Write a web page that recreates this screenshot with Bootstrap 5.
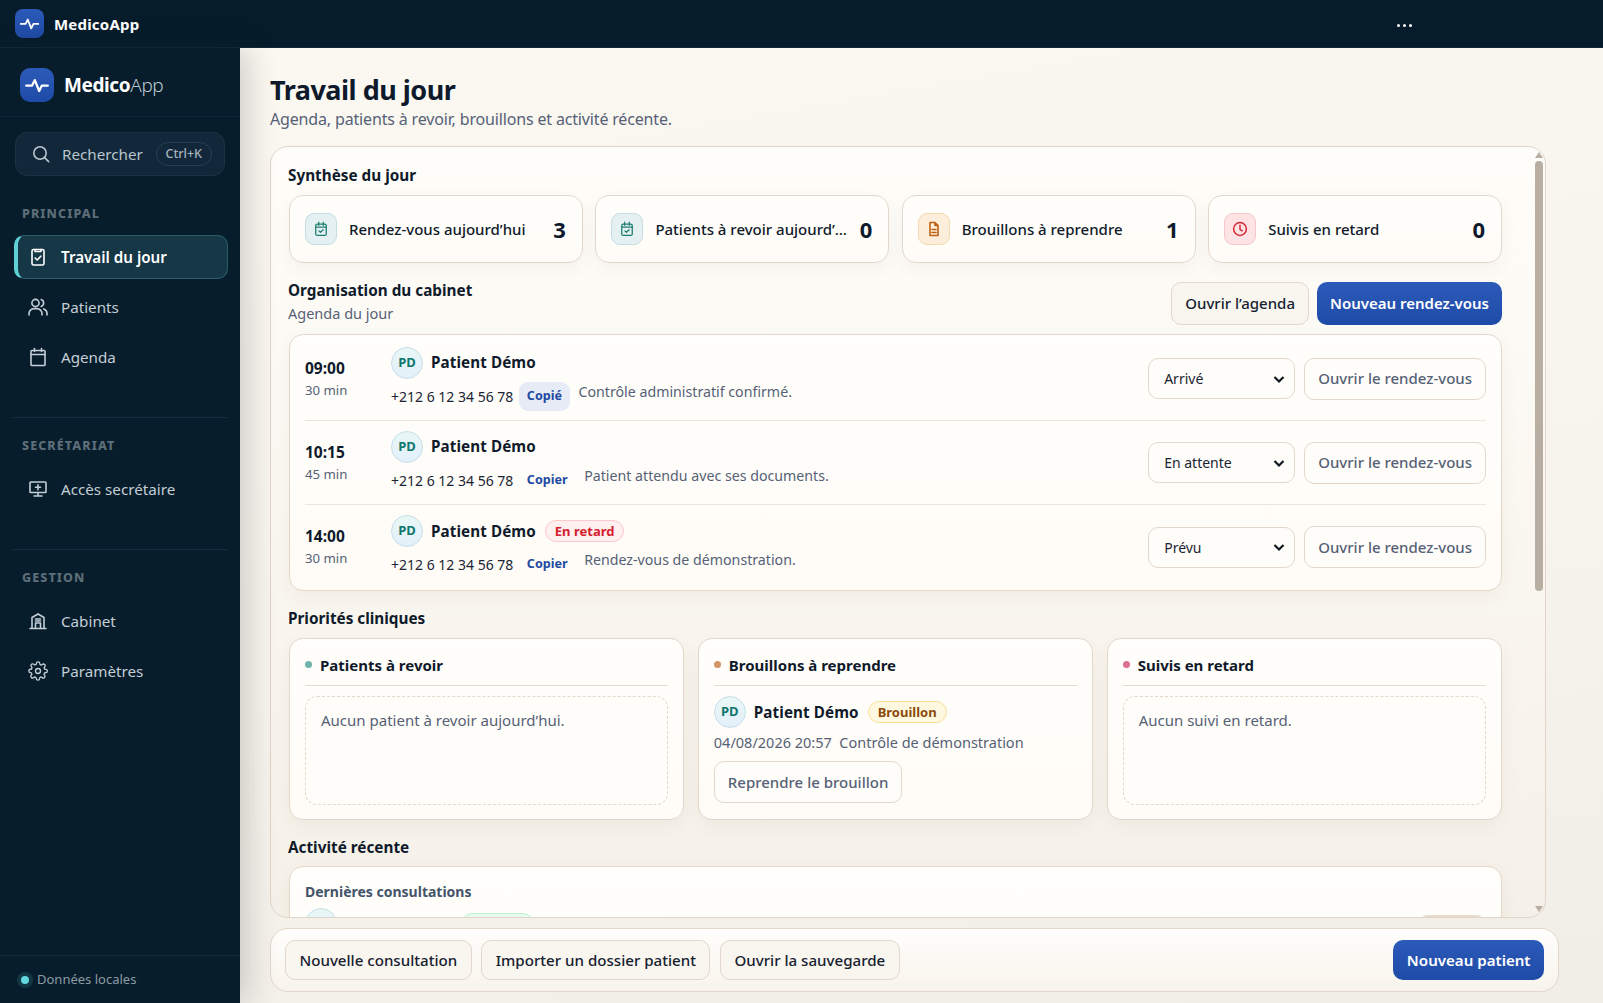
<!DOCTYPE html>
<html lang="fr">
  <head>
    <meta charset="UTF-8">
    <meta name="viewport" content="width=device-width, initial-scale=1.0">
    <title>MedicoApp</title>
    <link href="https://cdn.jsdelivr.net/npm/bootstrap@5.3.0/dist/css/bootstrap.min.css" rel="stylesheet">
    <style>
      html, body { height: 100%; }
      body {
        font-family: "Noto Sans", "Liberation Sans", sans-serif;
        background: #f6f3ed;
        color: #0f1a2b;
        overflow: hidden;
        font-size: 15px;
      }
      svg { display: block; flex: none; }
      .ico { fill: none; stroke: currentColor; stroke-width: 1.6; stroke-linecap: round; stroke-linejoin: round; }

      /* top bar */
      .top-bar { height: 48px; background: #061c2b; padding: 0 15px; border-bottom: 1px solid #10293a; }
      .logo-tile { background: linear-gradient(180deg, #2c5ab8, #1f4ba8); color: #fff; width: 29px; height: 29px; border-radius: 8px; }
      .top-name { color: #fff; font-weight: 700; font-size: 15px; letter-spacing: .2px; margin-left: 10px; padding-top: 1px; }
      .dots { margin-right: 176px; gap: 3px; padding-top: 3px; }
      .dots i { width: 3px; height: 3px; background: #fff; border-radius: 50%; display: block; }

      /* sidebar */
      .side { width: 240px; flex: none; background: #071d2b; color: #c3ced6; position: relative; z-index: 2; box-shadow: 8px 0 28px rgba(40, 40, 40, .2); }
      .side-brand { height: 69px; padding: 6px 20px 0; border-bottom: 1px solid #10293a; }
      .side-brand .logo-tile { width: 34px; height: 34px; border-radius: 10px; }
      .side-name { font-size: 19px; margin-left: 10px; color: #b9c8d3; font-weight: 300; letter-spacing: -.4px; }
      .side-name b { color: #fff; font-weight: 700; }
      .search-box { margin: 15px 15px 0; height: 44px; border: 1px solid #1b3442; background: #12283a; border-radius: 12px; padding: 0 12px 0 16px; font-size: 15.2px; color: #b9c5cd; }
      .kbd-pill { margin-left: auto; font-size: 12.5px; font-weight: 500; height: 24px; padding: 0 9px; border: 1px solid #24404f; border-radius: 12px; color: #a6b4bd; }
      .side-label { font-size: 12.5px; font-weight: 800; letter-spacing: 1.1px; color: #5d6e79; padding-left: 22px; margin-bottom: 12px; line-height: 18px; }
      .side-item { height: 44px; margin: 0 12px 6px 14px; padding-left: 14px; gap: 13px; color: #c3ced6; font-size: 15.2px; text-decoration: none; border-radius: 10px; }
      .side-item svg { width: 20px; height: 20px; }
      .side-item.on { background: #163746; border: 1px solid #2a5d6b; border-left: 4px solid #5fd0d8; color: #fff; font-weight: 600; padding-left: 10px; }
      .side-rule { border-top: 1px solid #12303f; margin: 0 12px 0 13px; }
      .side-foot { margin-top: auto; height: 48px; border-top: 1px solid #12293a; padding-left: 21px; font-size: 13px; color: #8b9aa4; gap: 6px; }
      .led { width: 8px; height: 8px; background: #62d7e0; border-radius: 50%; box-shadow: 0 0 0 4px #123743; margin-right: 2px; }

      /* main */
      .main-area { background: linear-gradient(170deg, #fbf8f2 0%, #f7f4ed 55%, #f1eee8 100%); padding: 0 14px 11px 30px; min-width: 0; }
      .page-title { font-size: 27px; font-weight: 700; letter-spacing: -.5px; margin: 0; line-height: 36px; padding-top: 24px; color: #0e1a2c; }
      .page-sub { font-size: 16px; letter-spacing: -.16px; color: #566176; line-height: 24px; margin: -1px 0 15px; }
      .panel { position: relative; width: 1276px; flex: 1 1 0; min-height: 0; border: 1px solid #e0d5c8; border-radius: 18px; background: linear-gradient(180deg, #fffdf9, #f5f1e8); overflow: hidden; padding: 16px 43px 16px 17px; }
      .sec-title { font-size: 15.3px; font-weight: 700; line-height: 24px; color: #0f1a2b; }

      /* scrollbar drawn over the panel, headless hides the real one */
      .scroll-rail { position: absolute; top: 5px; bottom: 5px; right: 2px; width: 8px; }
      .scroll-thumb { position: absolute; top: 9px; left: 0; width: 8px; height: 430px; background: #b8aea2; border-radius: 4px; }
      .scroll-up, .scroll-down { position: absolute; left: 0; width: 0; height: 0; border-left: 4px solid transparent; border-right: 4px solid transparent; }
      .scroll-up { top: 0; border-bottom: 6px solid #b8aea2; }
      .scroll-down { bottom: 0; border-top: 6px solid #b8aea2; }

      .soft-box { background: linear-gradient(180deg, #fffefb, #fffcf7); border: 1px solid #e2d7ca; border-radius: 14px; box-shadow: 0 6px 18px rgba(70, 55, 35, .05); }
      .stat-grid { display: grid; grid-template-columns: repeat(4, 1fr); gap: 12.5px; margin: 8px 0 15px 1px; }
      .stat-box { height: 68px; padding: 0 16px 0 15px; gap: 12px; min-width: 0; }
      .stat-ico { width: 32px; height: 32px; border-radius: 9px; border: 1px solid; flex: none; }
      .stat-ico.teal { background: #e5f0f2; border-color: #c3dde1; color: #1e7d70; }
      .stat-ico.amber { background: #fdeedb; border-color: #f5d9b3; color: #bf5f13; }
      .stat-ico.rose { background: #fde3e3; border-color: #f6c7c9; color: #d62839; }
      .stat-text { font-size: 15px; font-weight: 500; flex: 1; min-width: 0; white-space: nowrap; overflow: hidden; text-overflow: ellipsis; color: #0f1a2b; }
      .stat-num { font-size: 22px; font-weight: 700; color: #0e1a2c; line-height: 1; }

      .btn-beige, .btn-plain, .btn-blue { font-size: 15px; font-weight: 500; border-radius: 10px; padding: 0 13px; height: 43px; white-space: nowrap; }
      .btn-beige { background: #f9f6f0; border: 1px solid #e2d7ca; color: #16202f; }
      .btn-plain { background: #fffdfa; border: 1px solid #e2d7ca; color: #566176; height: 42px; }
      .btn-blue { background: linear-gradient(180deg, #2c5ab8, #1f4ba8); border: 0; color: #fff; font-weight: 600; padding: 0 13px; }
      .sub-note { font-size: 14.5px; color: #566176; line-height: 22px; }

      .agenda-box { margin: 9px 0 0 1px; padding: 2px 15px 1px; }
      .agenda-row { height: 84px; border-bottom: 1px solid #ece5da; }
      .agenda-row:last-child { border-bottom: 0; }
      .time-col { width: 86px; flex: none; padding-bottom: 2px; }
      .time-big { font-size: 15.5px; font-weight: 700; line-height: 24px; }
      .time-dur { font-size: 13.2px; color: #566176; line-height: 20px; }
      .avatar { width: 32px; height: 32px; border-radius: 50%; background: linear-gradient(180deg, #e8f7f5, #e3f0fb); border: 1px solid #c6dfe8; color: #0f766e; font-size: 13px; font-weight: 700; flex: none; }
      .who { font-size: 15.2px; font-weight: 700; color: #0f1a2b; letter-spacing: .1px; }
      .phone { font-size: 14px; color: #1a2433; white-space: nowrap; }
      .copy-row { margin-top: 3px; }
      .copy-tag { font-size: 12.6px; font-weight: 700; color: #1e4aa3; padding: 0 7.5px; height: 29px; border-radius: 9px; margin-left: 6px; }
      .copy-tag.done { background: #e6ebf6; }
      .row-note { font-size: 14.2px; color: #566176; margin-left: 9px; margin-top: -9px; }
      .tag-pill { font-size: 13px; font-weight: 700; border: 1px solid; border-radius: 11px; padding: 0 9px; height: 22px; line-height: 20px; margin-left: 9px; }
      .tag-red { background: #fff0f0; border-color: #fbc9cb; color: #d4202c; }
      .tag-yel { background: #fff8e0; border-color: #f8e09a; color: #8a4b0c; }
      .tag-green { background: #e6fbef; border-color: #bdf0d2; color: #15803d; margin: 5px 0 0 11px; padding: 0 5px; }
      .state-select { width: 147px; height: 41px; font-size: 14px; border: 1px solid #e2d7ca; border-radius: 10px; background-color: #fffdfa; color: #1a2433; padding-left: 15px; margin-right: 9px; background-size: 12px 12px; background-position: right 9px center; background-image: url("data:image/svg+xml,%3csvg xmlns='http://www.w3.org/2000/svg' viewBox='0 0 12 12'%3e%3cpath d='M1.5 4 6 8.5 10.5 4' fill='none' stroke='%23101820' stroke-width='2.2'/%3e%3c/svg%3e"); }

      .prio-grid { display: grid; grid-template-columns: repeat(3, 1fr); gap: 13.5px; margin: 8px 0 15px 1px; }
      .prio-box { height: 182px; padding: 7px 15px 14px; }
      .prio-head { height: 40px; border-bottom: 1px solid #e4dacd; margin-bottom: 10px; gap: 8px; font-size: 15px; font-weight: 700; }
      .dot { width: 7px; height: 7px; border-radius: 50%; margin-top: -3px; }
      .empty-box { height: 109px; border: 1px dashed #e2d7ca; border-radius: 12px; background: #fffdf9; padding: 12px 15px; font-size: 15px; color: #566176; }
      .draft-meta { font-size: 14.5px; color: #566176; margin: 3px 0 8px; line-height: 22px; }

      .recent-box { margin: 7px 0 0 1px; padding: 15px 15px; height: 460px; }
      .recent-title { font-size: 14px; font-weight: 700; color: #44546a; line-height: 20px; margin-bottom: 6px; }
      .peach-btn { background: #e9dccd; color: #8a4b0c; border: 0; border-radius: 10px; font-size: 14px; height: 40px; width: 68px; margin-top: 7px; }

      .foot-bar { width: 1289px; height: 64px; margin-top: 10px; flex: none; border: 1px solid #e2d7ca; border-radius: 18px; background: linear-gradient(180deg, #fffefc, #f8f4ec); padding: 0 14px; gap: 9.5px; }
      .foot-bar .btn-beige, .foot-bar .btn-blue { height: 40px; padding: 0 13.5px; font-size: 15.1px; }
    </style>
  </head>
  <body class="d-flex flex-column">
    <svg width="0" height="0" class="position-absolute">
      <symbol id="pulse" viewBox="0 0 24 24"><path d="M2 12.5h5.5l2.5-5 4 10 2.5-5H22" fill="none" stroke="currentColor" stroke-width="2.1" stroke-linecap="round" stroke-linejoin="round"/></symbol>
      <symbol id="cal-check" viewBox="0 0 24 24"><rect x="5" y="5.5" width="14" height="15" rx="2" fill="none" stroke="currentColor" stroke-width="1.7"/><path d="M5 9.5h14M9 3v4M15 3v4M9.2 14.5l2 2 3.6-3.6" fill="none" stroke="currentColor" stroke-width="1.7" stroke-linecap="round" stroke-linejoin="round"/></symbol>
    </svg>

    <header class="top-bar d-flex align-items-center flex-none">
      <span class="logo-tile d-flex align-items-center justify-content-center"><svg width="21" height="21"><use href="#pulse"/></svg></span>
      <span class="top-name">MedicoApp</span>
      <span class="dots d-flex ms-auto"><i></i><i></i><i></i></span>
    </header>

    <div class="d-flex flex-grow-1" style="min-height:0">
      <aside class="side d-flex flex-column">
        <div class="side-brand d-flex align-items-center">
          <span class="logo-tile d-flex align-items-center justify-content-center"><svg width="26" height="26"><use href="#pulse"/></svg></span>
          <span class="side-name"><b>Medico</b>App</span>
        </div>
        <div class="search-box d-flex align-items-center">
          <svg class="ico me-2" width="18" height="18" viewBox="0 0 18 18"><circle cx="8" cy="8" r="6.2"/><path d="M12.6 12.6 16.6 16.6"/></svg>
          <span class="ms-1">Rechercher</span>
          <span class="kbd-pill d-flex align-items-center">Ctrl+K</span>
        </div>

        <div class="side-label" style="margin-top:29px">PRINCIPAL</div>
        <a class="side-item on d-flex align-items-center" href="#">
          <svg class="ico" viewBox="0 0 20 20"><rect x="4" y="2.5" width="12" height="15.5" rx="1.6"/><path d="M7 2.5v2h6v-2M7.2 11l2 2 3.6-3.8"/></svg>
          <span>Travail du jour</span>
        </a>
        <a class="side-item d-flex align-items-center" href="#">
          <svg class="ico" viewBox="0 0 20 20"><circle cx="7.5" cy="6" r="3.6"/><path d="M1 18v-1.4a5 5 0 0 1 5-5h3a5 5 0 0 1 5 5V18M13.2 2.6a3.6 3.6 0 0 1 0 6.8M15.8 11.9A5 5 0 0 1 19 16.6V18"/></svg>
          <span>Patients</span>
        </a>
        <a class="side-item d-flex align-items-center" href="#">
          <svg class="ico" viewBox="0 0 20 20"><rect x="3" y="3.5" width="14" height="15" rx=".8"/><path d="M3 7.5h14M6.5 1.5v3M13.5 1.5v3"/></svg>
          <span>Agenda</span>
        </a>

        <div class="side-rule" style="margin-top:32px"></div>
        <div class="side-label" style="margin-top:19px">SECRÉTARIAT</div>
        <a class="side-item d-flex align-items-center" href="#">
          <svg class="ico" viewBox="0 0 20 20"><rect x="2" y="3" width="16" height="10.5" rx=".8"/><path d="M10 13.5V17M6 17h8M10 5.8v5M7.5 8.3h5"/></svg>
          <span>Accès secrétaire</span>
        </a>

        <div class="side-rule" style="margin-top:32px"></div>
        <div class="side-label" style="margin-top:19px">GESTION</div>
        <a class="side-item d-flex align-items-center" href="#">
          <svg class="ico" viewBox="0 0 20 20"><path d="M4 17V6.5L10 3l6 3.5V17M2 17.5h16M7.5 17v-5h5v5M7.5 8h5M7.5 10h5"/></svg>
          <span>Cabinet</span>
        </a>
        <a class="side-item d-flex align-items-center" href="#">
          <svg class="ico" viewBox="0 0 24 24"><circle cx="12" cy="12" r="3"/><path d="M19.4 15a1.7 1.7 0 0 0 .3 1.8l.1.1a2 2 0 1 1-2.9 2.9l-.1-.1a1.7 1.7 0 0 0-2.9 1.2V21a2 2 0 1 1-4 0v-.1A1.7 1.7 0 0 0 7 19.7l-.1.1A2 2 0 1 1 4 16.9l.1-.1a1.7 1.7 0 0 0-1.2-2.9H3a2 2 0 1 1 0-4h.1A1.7 1.7 0 0 0 4.3 7l-.1-.1A2 2 0 1 1 7.1 4l.1.1a1.7 1.7 0 0 0 2.9-1.2V3a2 2 0 1 1 4 0v.1a1.7 1.7 0 0 0 2.9 1.2l.1-.1A2 2 0 1 1 20 7.1l-.1.1a1.7 1.7 0 0 0 1.2 2.9h.1a2 2 0 1 1 0 4h-.1a1.7 1.7 0 0 0-1.7.9z"/></svg>
          <span>Paramètres</span>
        </a>

        <div class="side-foot d-flex align-items-center"><span class="led"></span><span>Données locales</span></div>
      </aside>

      <main class="main-area flex-grow-1 d-flex flex-column">
        <h1 class="page-title">Travail du jour</h1>
        <p class="page-sub">Agenda, patients à revoir, brouillons et activité récente.</p>

        <div class="panel">
          <div class="scroll-rail"><span class="scroll-up"></span><span class="scroll-thumb"></span><span class="scroll-down"></span></div>

          <div class="sec-title">Synthèse du jour</div>
          <div class="stat-grid">
            <div class="soft-box stat-box d-flex align-items-center">
              <span class="stat-ico teal d-flex align-items-center justify-content-center"><svg width="18" height="18"><use href="#cal-check"/></svg></span>
              <span class="stat-text">Rendez-vous aujourd’hui</span><span class="stat-num">3</span>
            </div>
            <div class="soft-box stat-box d-flex align-items-center">
              <span class="stat-ico teal d-flex align-items-center justify-content-center"><svg width="18" height="18"><use href="#cal-check"/></svg></span>
              <span class="stat-text">Patients à revoir aujourd’hui</span><span class="stat-num">0</span>
            </div>
            <div class="soft-box stat-box d-flex align-items-center">
              <span class="stat-ico amber d-flex align-items-center justify-content-center"><svg class="ico" width="14" height="16" viewBox="0 0 14 16"><path d="M3 1.5h5L11 4.5v10H3zM8 1.5v3h3M5 8.5h4M5 11.5h4"/></svg></span>
              <span class="stat-text">Brouillons à reprendre</span><span class="stat-num">1</span>
            </div>
            <div class="soft-box stat-box d-flex align-items-center">
              <span class="stat-ico rose d-flex align-items-center justify-content-center"><svg class="ico" width="16" height="16" viewBox="0 0 17 17"><circle cx="8.5" cy="8.5" r="6.8"/><path d="M8.5 4.6v4.2l2.4 1.6"/></svg></span>
              <span class="stat-text">Suivis en retard</span><span class="stat-num">0</span>
            </div>
          </div>

          <div class="d-flex align-items-start justify-content-between">
            <div>
              <div class="sec-title">Organisation du cabinet</div>
              <div class="sub-note">Agenda du jour</div>
            </div>
            <div class="d-flex gap-2 pt-1">
              <button class="btn btn-beige">Ouvrir l’agenda</button>
              <button class="btn btn-blue">Nouveau rendez-vous</button>
            </div>
          </div>

          <div class="soft-box agenda-box">
            <div class="agenda-row d-flex align-items-center">
              <div class="time-col"><div class="time-big">09:00</div><div class="time-dur">30 min</div></div>
              <div class="flex-grow-1">
                <div class="d-flex align-items-center"><span class="avatar d-flex align-items-center justify-content-center me-2">PD</span><span class="who">Patient Démo</span></div>
                <div class="copy-row d-flex align-items-center"><span class="phone">+212 6 12 34 56 78</span><span class="copy-tag done d-flex align-items-center">Copié</span><span class="row-note">Contrôle administratif confirmé.</span></div>
              </div>
              <select class="form-select state-select"><option>Arrivé</option></select>
              <button class="btn btn-plain">Ouvrir le rendez-vous</button>
            </div>
            <div class="agenda-row d-flex align-items-center">
              <div class="time-col"><div class="time-big">10:15</div><div class="time-dur">45 min</div></div>
              <div class="flex-grow-1">
                <div class="d-flex align-items-center"><span class="avatar d-flex align-items-center justify-content-center me-2">PD</span><span class="who">Patient Démo</span></div>
                <div class="copy-row d-flex align-items-center"><span class="phone">+212 6 12 34 56 78</span><span class="copy-tag d-flex align-items-center">Copier</span><span class="row-note">Patient attendu avec ses documents.</span></div>
              </div>
              <select class="form-select state-select"><option>En attente</option></select>
              <button class="btn btn-plain">Ouvrir le rendez-vous</button>
            </div>
            <div class="agenda-row d-flex align-items-center">
              <div class="time-col"><div class="time-big">14:00</div><div class="time-dur">30 min</div></div>
              <div class="flex-grow-1">
                <div class="d-flex align-items-center"><span class="avatar d-flex align-items-center justify-content-center me-2">PD</span><span class="who">Patient Démo</span><span class="tag-pill tag-red">En retard</span></div>
                <div class="copy-row d-flex align-items-center"><span class="phone">+212 6 12 34 56 78</span><span class="copy-tag d-flex align-items-center">Copier</span><span class="row-note">Rendez-vous de démonstration.</span></div>
              </div>
              <select class="form-select state-select"><option>Prévu</option></select>
              <button class="btn btn-plain">Ouvrir le rendez-vous</button>
            </div>
          </div>

          <div class="sec-title" style="margin-top:15px">Priorités cliniques</div>
          <div class="prio-grid">
            <div class="soft-box prio-box">
              <div class="prio-head d-flex align-items-center"><span class="dot" style="background:#6fb1ab"></span>Patients à revoir</div>
              <div class="empty-box">Aucun patient à revoir aujourd’hui.</div>
            </div>
            <div class="soft-box prio-box">
              <div class="prio-head d-flex align-items-center"><span class="dot" style="background:#d39468"></span>Brouillons à reprendre</div>
              <div class="d-flex align-items-center"><span class="avatar d-flex align-items-center justify-content-center me-2">PD</span><span class="who">Patient Démo</span><span class="tag-pill tag-yel">Brouillon</span></div>
              <div class="draft-meta">04/08/2026 20:57 &nbsp;Contrôle de démonstration</div>
              <button class="btn btn-plain">Reprendre le brouillon</button>
            </div>
            <div class="soft-box prio-box">
              <div class="prio-head d-flex align-items-center"><span class="dot" style="background:#d9718f"></span>Suivis en retard</div>
              <div class="empty-box">Aucun suivi en retard.</div>
            </div>
          </div>

          <div class="sec-title">Activité récente</div>
          <div class="soft-box recent-box">
            <div class="recent-title">Dernières consultations</div>
            <div class="d-flex align-items-start">
              <span class="avatar d-flex align-items-center justify-content-center me-2">PD</span><span class="who pt-1">Patient Démo</span><span class="tag-pill tag-green">Terminée</span>
              <button class="btn peach-btn ms-auto">Ouvrir</button>
            </div>
          </div>
        </div>

        <div class="foot-bar d-flex align-items-center">
          <button class="btn btn-beige">Nouvelle consultation</button>
          <button class="btn btn-beige">Importer un dossier patient</button>
          <button class="btn btn-beige">Ouvrir la sauvegarde</button>
          <button class="btn btn-blue ms-auto">Nouveau patient</button>
        </div>
      </main>
    </div>

    <script src="https://cdn.jsdelivr.net/npm/bootstrap@5.3.0/dist/js/bootstrap.bundle.min.js"></script>
  </body>
</html>
